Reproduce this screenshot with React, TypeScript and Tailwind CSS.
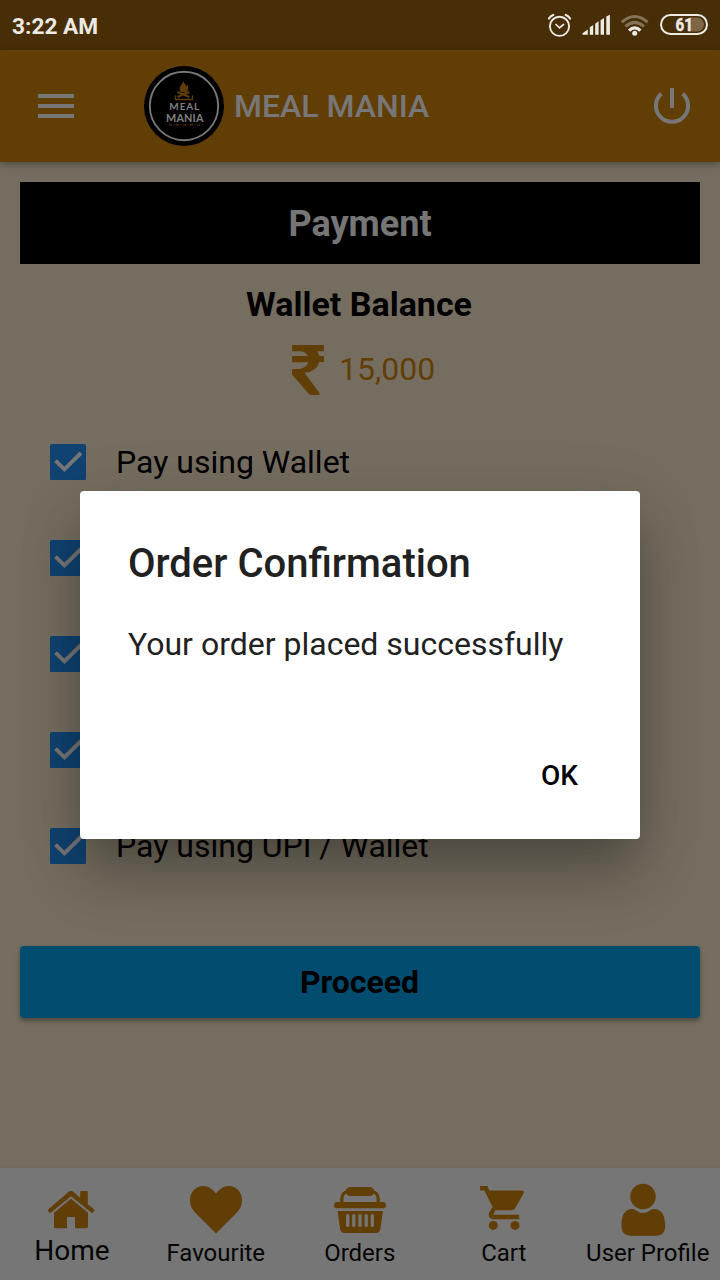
import React from "react";

const AMBER = "#623e07";

function StatusBar() {
  return (
    <div className="flex h-[50px] shrink-0 items-center justify-between bg-[#472e06] pl-3 pr-2">
      <span className="pt-[4px] text-[22.7px] font-bold leading-none text-[#edeae4]">3:22 AM</span>
      <svg width="164" height="50" viewBox="548 0 164 50" fill="none">
        <g stroke="#edeae4" strokeLinecap="round">
          <circle cx="559.5" cy="26.3" r="9.6" strokeWidth="1.9" />
          <path d="M549 18.500Q550.500 16 553.200 15M570 18.500Q568.500 16 565.800 15" strokeWidth="2.200" />
          <path d="M556 24.500l3.500 3.300 4-3.300" strokeWidth="1.700" />
        </g>
        <path
          fill="#edeae4"
          d="M582.500 34.700v-1.500l5.300-3.700v5.200zM589.800 34.700v-7.500l3.400-2.300v9.800zM595.200 34.700v-11l3.400-2.400v13.400zM600.600 34.700v-14.500l3.400-2.300v16.800zM606.300 34.700v-18.300l3.600-1.700v20z"
        />
        <path d="M621.800 22.200Q634.700 10.800 647.600 22.200" stroke="#85745a" strokeWidth="3" />
        <path d="M625.500 26.500Q634.700 18.200 643.900 26.500" stroke="#85745a" strokeWidth="3" />
        <path d="M629 30.600Q634.700 25.100 640.400 30.600" stroke="#edeae4" strokeWidth="3.200" />
        <circle cx="634.700" cy="33.200" r="2.500" fill="#edeae4" />
        <path d="M690 17.500h7a7 7 0 0 1 0 14h-7z" fill="#7d6545" />
        <rect x="661" y="15" width="46" height="19" rx="9.500" stroke="#edeae4" strokeWidth="2" />
        <text
          x="675.500"
          y="30.800"
          fill="#edeae4"
          stroke="#edeae4"
          strokeWidth="0.500"
          fontFamily="Roboto, sans-serif"
          fontSize="17.500"
          fontWeight="700"
          textLength="17.500"
          lengthAdjust="spacingAndGlyphs"
        >
          61
        </text>
      </svg>
    </div>
  );
}

function Logo() {
  return (
    <svg width="80" height="80" viewBox="0 0 80 80" className="shrink-0">
      <circle cx="40" cy="40" r="40" fill="#000" />
      <circle cx="40" cy="40" r="34.200" fill="none" stroke="#777" strokeWidth="1.900" />
      <path
        fill={AMBER}
        d="M39 14c0 3 3 3.500 3 6.500l1.500-2c1.500 2.500 1 5.500-1 7.500h-5c-3.500-3-1.500-6 0-7.500 1.500-1.500 1-3 1.500-4.500zM34 25l5 2 6-2 1 2-4 1.500 4 1.500-1 2-6-2.500-5 2.500-1-2 4-1.500-4-1.500z"
      />
      <path d="M31.500 29.500v4h17v-4" stroke={AMBER} strokeWidth="1.300" fill="none" />
      <text x="25.300" y="44.200" textLength="30" fill="#808080" fontFamily="Lato, sans-serif" fontSize="10" fontWeight="700">
        MEAL
      </text>
      <text x="22" y="56" textLength="37.500" fill="#808080" fontFamily="Lato, sans-serif" fontSize="10.800" fontWeight="700">
        MANIA
      </text>
      <path d="M25 59h34" stroke={AMBER} strokeWidth="1.600" strokeDasharray="3 1.500 1 1.500" opacity=".7" />
    </svg>
  );
}

function Header() {
  return (
    <header className="relative flex h-[112px] shrink-0 items-center bg-[#623e07] pl-[38px] pr-[28px] shadow-[0_2px_8px_rgba(0,0,0,0.35)]">
      <div className="flex w-9 flex-col gap-[6px]">
        <div className="h-1 bg-[#777]" />
        <div className="h-1 bg-[#777]" />
        <div className="h-1 bg-[#777]" />
      </div>
      <div className="ml-[70px] flex items-center gap-[10px]">
        <Logo />
        <h1 className="text-[32px] font-medium leading-none text-[#777]">MEAL MANIA</h1>
      </div>
      <svg className="ml-auto" width="40" height="40" viewBox="652 86 40 40" fill="none" stroke="#777" strokeWidth="4">
        <path d="M672 88v20M661.300 93.700a16.100 16.100 0 1 0 21.400 0" />
      </svg>
    </header>
  );
}

function PayOption({ label }: { label?: string }) {
  return (
    <label className="flex h-24 items-center gap-[30px]">
      <svg width="36" height="36" viewBox="0 0 36 36" className="shrink-0">
        <rect width="36" height="36" rx="1.500" fill="#104372" />
        <path d="M5.500 16.600l8.900 8.700L31 9" fill="none" stroke="#777" strokeWidth="3.900" />
      </svg>
      {label && <span className="whitespace-nowrap text-[32px] leading-none text-black">{label}</span>}
    </label>
  );
}

function HomeIcon() {
  return (
    <svg className="mr-[2px]" width="48" height="52" viewBox="47 1183 48 52" fill={AMBER}>
      <path d="M48.200 1209.500 69 1191.600q2-1.500 4 0l7.200 6.200v-6q0-.8.800-.8h6q.8 0 .8.800v12.400l6.500 5.300q.7.700 0 1.300l-1.500 1.800q-.7.700-1.500 0L71 1196.300l-20 16.300q-.8.600-1.500 0l-1.400-1.700q-.6-.8.100-1.400z" />
      <path d="m71 1198.800 17 14v14q0 1.400-1.400 1.400H75v-11.300h-8v11.300H55.400q-1.400 0-1.400-1.400v-14z" />
    </svg>
  );
}

function HeartIcon() {
  return (
    <svg width="54" height="52" viewBox="189 1183 54 52" fill={AMBER}>
      <path d="M216 1193.500c4-5 7.500-7.500 13-7.500 7 0 13 6 13 14 0 5-1.500 8.500-5 12.500l-21 21-21-21c-3.500-4-5-7.500-5-12.500 0-8 6-14 13-14 5.500 0 9 2.500 13 7.500z" />
    </svg>
  );
}

function BasketIcon() {
  return (
    <svg width="54" height="52" viewBox="333 1183 54 52" fill={AMBER}>
      <path d="M341.800 1203V1199C341.800 1194 344.500 1191.700 349 1191.500" fill="none" stroke={AMBER} strokeWidth="3.200" />
      <path d="M378.200 1203V1199C378.200 1194 375.500 1191.700 371 1191.500" fill="none" stroke={AMBER} strokeWidth="3.200" />
      <path d="M350 1187H370Q372 1187 373.300 1188.800Q375.500 1191.500 373.300 1194.200Q372 1196 370 1196H350Q348 1196 346.700 1194.200Q344.500 1191.500 346.700 1188.800Q348 1187 350 1187Z" />
      <rect x="334" y="1202" width="52" height="6.300" rx="3.150" />
      <path
        fillRule="evenodd"
        d="M337.500 1211h45.500l-2.700 18.200q-.6 3.800-4.300 3.800h-31.500q-3.700 0-4.300-3.800zM346 1215.500v10q0 1.500 1.700 1.500t1.700-1.500v-10q0-1.500-1.700-1.500t-1.700 1.500zM352.200 1215.500v10q0 1.500 1.600 1.500t1.600-1.500v-10q0-1.500-1.600-1.500t-1.600 1.500zM358.400 1215.500v10q0 1.500 1.600 1.500t1.600-1.500v-10q0-1.500-1.600-1.500t-1.600 1.500zM364.600 1215.500v10q0 1.500 1.600 1.500t1.600-1.500v-10q0-1.500-1.600-1.500t-1.600 1.500zM370.700 1215.500v10q0 1.500 1.600 1.500t1.600-1.500v-10q0-1.500-1.600-1.500t-1.600 1.500z"
      />
    </svg>
  );
}

function CartIcon() {
  return (
    <svg width="54" height="52" viewBox="477 1183 54 52" fill={AMBER}>
      <path d="M480 1186h7.300l2.200 4.500h32.600q2.600.2 1.300 3.200l-8.100 14.200q-1.200 2.300-4 2.300h-15.800l-1.800 3.600q0 1 1 1h24.500v4.400h-26q-4.500-.4-4.500-4.500 0-1.300.8-2.600l3-5-8.100-16.700H480z" />
      <circle cx="493.300" cy="1225.400" r="4.500" />
      <circle cx="515" cy="1225.400" r="4.500" />
    </svg>
  );
}

function PersonIcon() {
  return (
    <svg className="mr-[10px]" width="46" height="54" viewBox="620.500 1183 46 54" fill={AMBER}>
      <circle cx="643.500" cy="1196.500" r="12.700" />
      <path d="M622 1226c0-10 2.500-17 11-17 3.500 0 5 4 10.500 4s7-4 10.500-4c8.500 0 11.700 7 11.700 17 0 6-3 9.700-8.700 9.700h-26c-6 0-9-3.700-9-9.700z" />
    </svg>
  );
}

function Tab({ icon, label, large }: { icon: React.ReactNode; label: string; large?: boolean }) {
  return (
    <div className="flex w-36 flex-col items-center pt-[15px]">
      <div className="flex h-[56px] items-start">{icon}</div>
      <span
        className={
          large
            ? "-mt-[2px] whitespace-nowrap text-[28px] leading-7 text-[#050505]"
            : "mr-[0.5px] whitespace-nowrap text-[24px] leading-7 text-[#050505]"
        }
      >
        {label}
      </span>
    </div>
  );
}

function Dialog() {
  return (
    <div className="absolute inset-0 flex items-center justify-center pt-[50px]">
      <div
        role="dialog"
        className="flex h-[348px] w-[560px] flex-col rounded bg-white px-12 shadow-[0_18px_30px_-14px_rgba(0,0,0,0.1),0_36px_60px_0px_rgba(0,0,0,0.24),0_12px_70px_0px_rgba(0,0,0,0.1)]"
      >
        <h2 className="mt-[53px] text-[40px] font-medium leading-10 text-[#212121]">Order Confirmation</h2>
        <p className="mt-[44px] whitespace-nowrap text-[32px] leading-8 text-[#212121]">Your order placed successfully</p>
        <button className="mt-[100px] self-end pr-[14px] text-[28px] font-medium leading-8 text-black">OK</button>
      </div>
    </div>
  );
}

export default function App() {
  return (
    <div className="relative flex h-[1280px] w-[720px] flex-col overflow-hidden bg-[#756e60] font-[Roboto,sans-serif]">
      <StatusBar />
      <Header />
      <main className="flex flex-1 flex-col px-5 pt-5">
        <h2 className="flex h-[82px] items-center justify-center bg-black pt-[2px] text-[36px] font-bold text-[#767676]">Payment</h2>
        <h3 className="mr-[2px] mt-5 text-center text-[34px] font-bold leading-10 text-black">Wallet Balance</h3>
        <div className="mt-[20px] flex h-[52px] items-center pl-[271px]">
          <svg width="34" height="52" viewBox="291 344 34 52" fill={AMBER}>
            <path d="M292 346q0-1 1-1h30q1 0 1 1v4.300q0 1-1 1h-6q1.700 2 2.300 4.700h3.700q1 0 1 1v4q0 1-1 1h-4q-1.500 9.500-14.500 10.800l15 20.200q.9 1.500-.7 2.100h-8q-1 0-1.600-.8L292 374.500v-4.500q0-1 1-1h4q9 0 11.500-6.800H293q-1 0-1-1v-4.200q0-1 1-1h15q-2.200-4.700-9-4.700h-6q-1 0-1-1z" />
          </svg>
          <span className="mb-[2px] ml-[14px] text-[32px] leading-none text-[#623e07]">15,000</span>
        </div>
        <div className="mt-[18px] flex flex-col pl-[30px]">
          <PayOption label="Pay using Wallet" />
          <PayOption />
          <PayOption />
          <PayOption />
          <PayOption label="Pay using UPI / Wallet" />
        </div>
        <button className="mt-[52px] h-[72px] rounded bg-[#024d6f] pr-px text-[32px] font-bold text-black shadow-[0_3px_5px_rgba(0,0,0,0.35)]">
          Proceed
        </button>
      </main>
      <nav className="flex h-[112px] shrink-0 bg-[#767676] shadow-[0_-1px_3px_rgba(0,0,0,0.08)]">
        <Tab icon={<HomeIcon />} label="Home" large />
        <Tab icon={<HeartIcon />} label="Favourite" />
        <Tab icon={<BasketIcon />} label="Orders" />
        <Tab icon={<CartIcon />} label="Cart" />
        <Tab icon={<PersonIcon />} label="User Profile" />
      </nav>
      <Dialog />
    </div>
  );
}
